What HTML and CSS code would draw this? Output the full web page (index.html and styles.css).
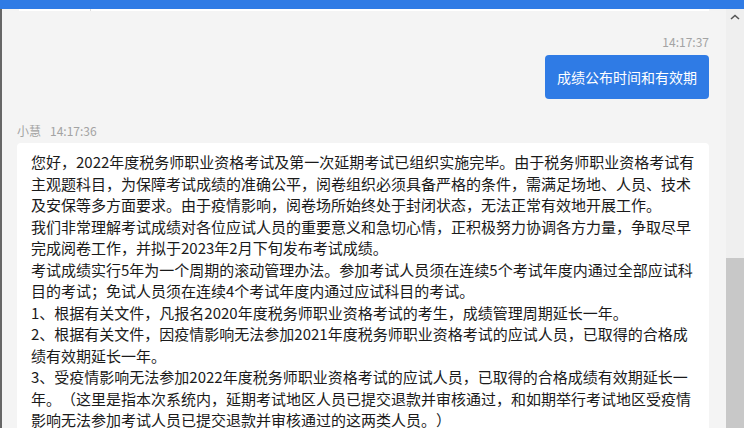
FILE: index.html
```html
<!DOCTYPE html>
<html lang="zh-CN">
<head>
    <meta charset="UTF-8">
    <meta name="viewport" content="width=device-width, initial-scale=1.0">
    <title>在线客服</title>
    <link rel="stylesheet" href="styles.css">
</head>
<body>
    <div class="topbar"></div>
    <div class="main">
        <div class="chat">
            <div class="prev-bubble"><span class="prev-line"></span></div>

            <div class="msg msg-user">
                <div class="msg-time">14:17:37</div>
                <div class="bubble bubble-user">成绩公布时间和有效期</div>
            </div>

            <div class="msg msg-bot">
                <div class="msg-meta"><span class="name">小慧</span><span>14:17:36</span></div>
                <div class="bubble bubble-bot">
                    您好，2022年度税务师职业资格考试及第一次延期考试已组织实施完毕。由于税务师职业资格考试有主观题科目，为保障考试成绩的准确公平，阅卷组织必须具备严格的条件，需满足场地、人员、技术及安保等多方面要求。由于疫情影响，阅卷场所始终处于封闭状态，无法正常有效地开展工作。<br>
                    我们非常理解考试成绩对各位应试人员的重要意义和急切心情，正积极努力协调各方力量，争取尽早完成阅卷工作，并拟于2023年2月下旬发布考试成绩。<br>
                    考试成绩实行5年为一个周期的滚动管理办法。参加考试人员须在连续5个考试年度内通过全部应试科目的考试；免试人员须在连续4个考试年度内通过应试科目的考试。<br>
                    1、根据有关文件，凡报名2020年度税务师职业资格考试的考生，成绩管理周期延长一年。<br>
                    2、根据有关文件，因疫情影响无法参加2021年度税务师职业资格考试的应试人员，已取得的合格成绩有效期延长一年。<br>
                    3、受疫情影响无法参加2022年度税务师职业资格考试的应试人员，已取得的合格成绩有效期延长一年。（这里是指本次系统内，延期考试地区人员已提交退款并审核通过，和如期举行考试地区受疫情影响无法参加考试人员已提交退款并审核通过的这两类人员。）
                </div>
            </div>
        </div>
        <div class="scrollbar">
            <svg class="scroll-up" width="10" height="6" viewBox="0 0 10 6">
                <path d="M1 5 L5 1.5 L9 5" fill="none" stroke="#555" stroke-width="1.6"/>
            </svg>
            <div class="scroll-thumb"></div>
        </div>
    </div>
</body>
</html>
```

FILE: styles.css
```css
html, body {
    height: 100%;
}

body {
    margin: 0;
    display: flex;
    flex-direction: column;
    overflow: hidden;
    background-color: #f4f4f4;
    font-family: "Noto Sans CJK SC", "Noto Sans", sans-serif;
    color: #222;
}

.topbar {
    height: 9px;
    flex-shrink: 0;
    background-color: #2f7be5;
}

.main {
    flex: 1;
    display: flex;
    min-height: 0;
}

.chat {
    flex: 1;
    overflow: hidden;
    border-left: 2px solid #666;
    padding: 0 17px 0 15px;
}

.prev-bubble {
    height: 2px;
    margin: 0 0 0 2px;
    background: #fff;
    position: relative;
}
.prev-line {
    position: absolute;
    left: 71px;
    top: 0;
    width: 1px;
    height: 2px;
    background: #ddd;
}

.msg-user {
    display: flex;
    flex-direction: column;
    align-items: flex-end;
    padding-top: 23px;
}

.msg-time,
.msg-meta {
    font-size: 12px;
    line-height: 16px;
    color: #a3a3a3;
}

.msg-meta .name {
    margin-right: 9px;
}

.bubble {
    border-radius: 4px;
}

.bubble-user {
    margin-top: 5px;
    padding: 12px 12px;
    font-size: 14px;
    line-height: 20px;
    color: #fff;
    background-color: #2f7be5;
}

.msg-bot {
    padding-top: 24px;
}

.bubble-bot {
    margin-top: 4px;
    padding: 8px 10px 8px 14px;
    font-size: 15px;
    line-height: 21.5px;
    text-spacing-trim: space-all;
    font-feature-settings: "chws" 0, "halt" 0;
    background-color: #fff;
    color: #1a1a1a;
}

.scrollbar {
    width: 18px;
    flex-shrink: 0;
    display: flex;
    flex-direction: column;
    align-items: center;
    background-color: #efefef;
}

.scroll-up {
    margin-top: 5px;
}

.scroll-thumb {
    align-self: stretch;
    margin-top: 238px;
    flex: 1;
    background-color: #c8c8c8;
}
```
